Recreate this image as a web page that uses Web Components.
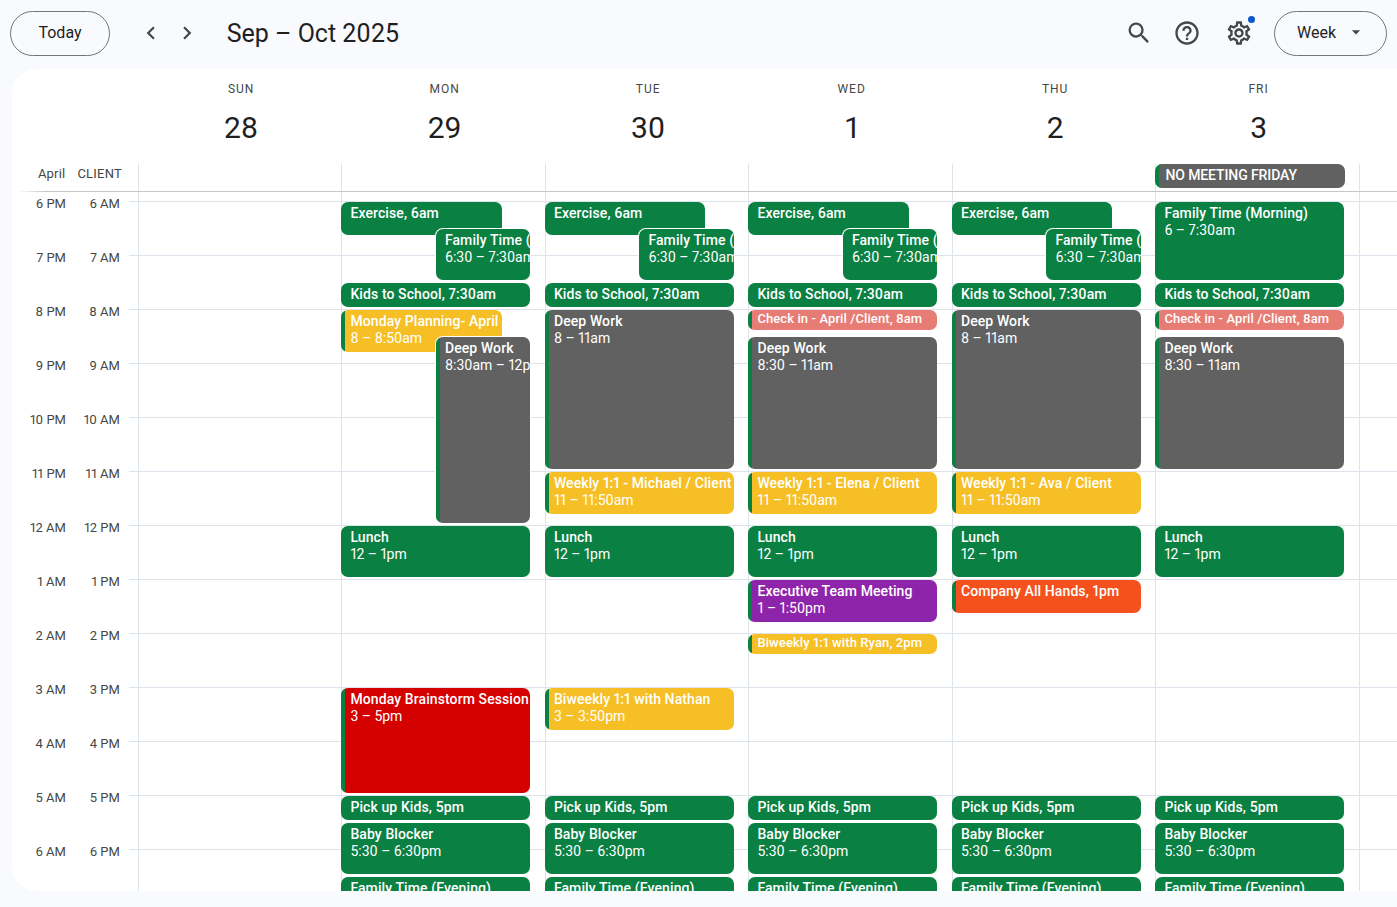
<!DOCTYPE html>
<html lang="en">
<head>
<meta charset="utf-8">
<title>Calendar</title>
<style>
  html, body { margin: 0; height: 100%; overflow: hidden; }
  body { background: #f8fafd; font-family: Roboto, "Noto Sans", sans-serif; color: #1f1f1f; font-variant-numeric: proportional-nums; }
</style>
</head>
<body>
<cal-app></cal-app>

<script>
const ICONS = {
  prev: 'M15.41 7.41 14 6l-6 6 6 6 1.41-1.41L10.83 12z',
  next: 'M10 6 8.59 7.41 13.17 12l-4.58 4.58L10 18l6-6z',
  search: 'M15.5 14h-.79l-.28-.27A6.471 6.471 0 0 0 16 9.5 6.5 6.5 0 1 0 9.5 16c1.61 0 3.09-.59 4.23-1.57l.27.28v.79l5 4.99L20.49 19l-4.99-5zm-6 0C7.01 14 5 11.99 5 9.5S7.01 5 9.5 5 14 7.01 14 9.5 11.99 14 9.5 14z',
  help: 'M11 18h2v-2h-2v2zm1-16C6.48 2 2 6.48 2 12s4.48 10 10 10 10-4.48 10-10S17.52 2 12 2zm0 18c-4.41 0-8-3.59-8-8s3.59-8 8-8 8 3.59 8 8-3.59 8-8 8zm0-14c-2.21 0-4 1.79-4 4h2c0-1.1.9-2 2-2s2 .9 2 2c0 2-3 1.75-3 5h2c0-2.25 3-2.5 3-5 0-2.21-1.79-4-4-4z',
  gear: 'M19.43 12.98c.04-.32.07-.64.07-.98 0-.34-.03-.66-.07-.98l2.11-1.65c.19-.15.24-.42.12-.64l-2-3.46c-.09-.16-.26-.25-.44-.25-.06 0-.12.01-.17.03l-2.49 1c-.52-.4-1.08-.73-1.69-.98l-.38-2.65C14.46 2.18 14.25 2 14 2h-4c-.25 0-.46.18-.49.42l-.38 2.65c-.61.25-1.17.59-1.69.98l-2.49-1c-.06-.02-.12-.03-.18-.03-.17 0-.34.09-.43.25l-2 3.46c-.13.22-.07.49.12.64l2.11 1.65c-.04.32-.07.65-.07.98 0 .33.03.66.07.98l-2.11 1.65c-.19.15-.24.42-.12.64l2 3.46c.09.16.26.25.44.25.06 0 .12-.01.17-.03l2.49-1c.52.4 1.08.73 1.69.98l.38 2.65c.03.24.24.42.49.42h4c.25 0 .46-.18.49-.42l.38-2.65c.61-.25 1.17-.59 1.69-.98l2.49 1c.06.02.12.03.18.03.17 0 .34-.09.43-.25l2-3.46c.12-.22.07-.49-.12-.64l-2.11-1.65zm-1.98-1.71c.04.31.05.52.05.73 0 .21-.02.43-.05.73l-.14 1.13.89.7 1.08.84-.7 1.21-1.27-.51-1.04-.42-.9.68c-.43.32-.84.56-1.25.73l-1.06.43-.16 1.13-.2 1.35h-1.4l-.19-1.35-.16-1.13-1.06-.43c-.43-.18-.83-.41-1.23-.71l-.91-.7-1.06.43-1.27.51-.7-1.21 1.08-.84.89-.7-.14-1.13c-.03-.31-.05-.54-.05-.74s.02-.43.05-.73l.14-1.13-.89-.7-1.08-.84.7-1.21 1.27.51 1.04.42.9-.68c.43-.32.84-.56 1.25-.73l1.06-.43.16-1.13.2-1.35h1.39l.19 1.35.16 1.13 1.06.43c.43.18.83.41 1.23.71l.91.7 1.06-.43 1.27-.51.7 1.21-1.07.85-.89.7.14 1.13zM12 8c-2.21 0-4 1.79-4 4s1.79 4 4 4 4-1.79 4-4-1.79-4-4-4zm0 6c-1.1 0-2-.9-2-2s.9-2 2-2 2 .9 2 2-.9 2-2 2z',
  caret: 'M7 10l5 5 5-5z'
};

const svg = (name, size = 24) =>
  `<svg width="${size}" height="${size}" viewBox="0 0 24 24" fill="currentColor" aria-hidden="true"><path d="${ICONS[name]}"/></svg>`;

const GREEN = '#0b8043', YELLOW = '#f6bf26', GREY = '#616161', RED = '#d50000',
      PURPLE = '#8e24aa', ORANGE = '#f4511e', PINK = '#e67c73';

// Px values are measured from the top of the scrolling grid (y = 192 on the page)
const y = (pageY) => pageY - 192;

function commonEvents(extra) {
  return [
    ...extra,
    { title: 'Kids to School, 7:30am', top: 283, bottom: 307, color: GREEN },
    { title: 'Lunch', time: '12 – 1pm', top: 526, bottom: 577, color: GREEN },
    { title: 'Pick up Kids, 5pm', top: 796, bottom: 820, color: GREEN },
    { title: 'Baby Blocker', time: '5:30 – 6:30pm', top: 823, bottom: 874, color: GREEN },
    { title: 'Family Time (Evening)', top: 877, bottom: 931, color: GREEN }
  ];
}

const morning = [
  { title: 'Exercise, 6am', top: 202, bottom: 235, color: GREEN, width: 160.4 },
  { title: 'Family Time (Morning)', time: '6:30 – 7:30am', top: 229, bottom: 280, color: GREEN, shift: 94.5, ring: true }
];

const weekly = (name) => ({ title: `Weekly 1:1 - ${name} / Client`, time: '11 – 11:50am', top: 472, bottom: 514, color: YELLOW, strip: true });
const checkIn = { title: 'Check in - April /Client, 8am', top: 310, bottom: 330, color: PINK, strip: true, tiny: true };

const DAYS = [
  { name: 'SUN', date: '28', events: [] },
  { name: 'MON', date: '29', events: commonEvents([
    ...morning,
    { title: 'Monday Planning- April /Client', time: '8 – 8:50am', top: 310, bottom: 352, color: YELLOW, strip: true, width: 160.4 },
    { title: 'Deep Work', time: '8:30am – 12pm', top: 337, bottom: 523, color: GREY, strip: true, shift: 94.5, ring: true },
    { title: 'Monday Brainstorm Session', time: '3 – 5pm', top: 688, bottom: 793, color: RED, strip: true }
  ]) },
  { name: 'TUE', date: '30', events: commonEvents([
    ...morning,
    { title: 'Deep Work', time: '8 – 11am', top: 310, bottom: 469, color: GREY, strip: true },
    weekly('Michael'),
    { title: 'Biweekly 1:1 with Nathan', time: '3 – 3:50pm', top: 688, bottom: 730, color: YELLOW, strip: true }
  ]) },
  { name: 'WED', date: '1', events: commonEvents([
    ...morning,
    checkIn,
    { title: 'Deep Work', time: '8:30 – 11am', top: 337, bottom: 469, color: GREY, strip: true },
    weekly('Elena'),
    { title: 'Executive Team Meeting', time: '1 – 1:50pm', top: 580, bottom: 622, color: PURPLE, strip: true },
    { title: 'Biweekly 1:1 with Ryan, 2pm', top: 634, bottom: 654, color: YELLOW, strip: true, tiny: true }
  ]) },
  { name: 'THU', date: '2', events: commonEvents([
    ...morning,
    { title: 'Deep Work', time: '8 – 11am', top: 310, bottom: 469, color: GREY, strip: true },
    weekly('Ava'),
    { title: 'Company All Hands, 1pm', top: 580, bottom: 613, color: ORANGE, strip: true }
  ]) },
  { name: 'FRI', date: '3', allDay: 'NO MEETING FRIDAY', events: commonEvents([
    { title: 'Family Time (Morning)', time: '6 – 7:30am', top: 202, bottom: 280, color: GREEN },
    checkIn,
    { title: 'Deep Work', time: '8:30 – 11am', top: 337, bottom: 469, color: GREY, strip: true }
  ]) }
];

const LEFT_ZONE = ['6 PM', '7 PM', '8 PM', '9 PM', '10 PM', '11 PM', '12 AM', '1 AM', '2 AM', '3 AM', '4 AM', '5 AM', '6 AM'];
const RIGHT_ZONE = ['6 AM', '7 AM', '8 AM', '9 AM', '10 AM', '11 AM', '12 PM', '1 PM', '2 PM', '3 PM', '4 PM', '5 PM', '6 PM'];

class CalToolbar extends HTMLElement {
  connectedCallback() {
    this.attachShadow({ mode: 'open' }).innerHTML = `
      <style>
        :host {
          display: flex;
          align-items: center;
          height: 69px;
          padding: 0 10px 3px;
          box-sizing: border-box;
          color: #1f1f1f;
        }
        .pill {
          display: flex;
          align-items: center;
          justify-content: center;
          box-sizing: border-box;
          height: 45px;
          padding-bottom: 2px;
          border: 1px solid #747775;
          border-radius: 23px;
          font-size: 16px;
          font-weight: 400;
          color: #1f1f1f;
        }
        .today { width: 100px; }
        .week { width: 113px; gap: 10px; padding-left: 2px; margin-left: 21.5px; }
        .week svg { color: #444746; width: 20px; height: 20px; }
        .nav { display: flex; gap: 9.7px; margin-left: 28px; color: #444746; }
        .title { margin-left: 27px; font-size: 25px; font-weight: 400; flex: 1; }
        .icons { display: flex; color: #444746; }
        .icons svg { display: block; }
        .help { margin-left: 19.5px; }
        .gear { position: relative; margin-left: 24px; }
        .gear::after {
          content: '';
          position: absolute;
          top: -3px;
          left: 23px;
          width: 7px;
          height: 7px;
          border-radius: 50%;
          background: #0b57d0;
        }
      </style>
      <div class="pill today">Today</div>
      <div class="nav">${svg('prev', 26)}${svg('next', 26)}</div>
      <div class="title">Sep – Oct 2025</div>
      <div class="icons">
        <span>${svg('search', 28)}</span>
        <span class="help">${svg('help', 28)}</span>
        <span class="gear">${svg('gear', 28)}</span>
      </div>
      <div class="pill week">Week ${svg('caret')}</div>
    `;
  }
}

class CalEvent extends HTMLElement {
  connectedCallback() {
    this.attachShadow({ mode: 'open' }).innerHTML = `
      <style>
        :host {
          position: absolute;
          box-sizing: border-box;
          overflow: hidden;
          border-radius: 7px;
          color: #fff;
          font-size: 14px;
          line-height: 17px;
        }
        .box {
          box-sizing: border-box;
          height: 100%;
          padding: 3px 0 0 9px;
          white-space: nowrap;
          overflow: hidden;
        }
        :host([strip]) .box { border-left: 4px solid ${GREEN}; padding-left: 5px; }
        :host([tiny]) { font-size: 13px; line-height: 16px; }
        :host([tiny]) .box { padding-top: 1px; }
        .title { font-weight: 500; letter-spacing: 0.1px; }
      </style>
      <div class="box"><div class="title"><slot></slot></div><div><slot name="time"></slot></div></div>
    `;
  }
}

class CalDay extends HTMLElement {
  connectedCallback() {
    this.attachShadow({ mode: 'open' }).innerHTML = `
      <style>
        :host {
          display: block;
          position: relative;
          border-left: 1px solid #dde3ea;
          min-width: 0;
        }
      </style>
      <slot></slot>
    `;
  }
}

class CalGrid extends HTMLElement {
  connectedCallback() {
    const cols = DAYS.map(d => `
      <div class="head"><div class="dow">${d.name}</div><div class="date">${d.date}</div></div>`).join('');
    const allDay = DAYS.map(d => `
      <div class="ad-cell">${d.allDay ? `<div class="ad-event">${d.allDay}</div>` : ''}</div>`).join('');
    const labels = (list) => list.map(t => `<div class="tm">${t}</div>`).join('');

    this.attachShadow({ mode: 'open' }).innerHTML = `
      <style>
        :host {
          display: flex;
          flex-direction: column;
          height: 822px;
          margin-left: 12px;
          background: #fff;
          border-radius: 24px 0 0 24px;
          overflow: hidden;
          --cols: 125.9px repeat(6, 203.5px) 1fr;
        }
        .row { display: grid; grid-template-columns: var(--cols); flex: none; }
        .heads { height: 95px; color: #444746; }
        .head { display: flex; flex-direction: column; align-items: center; padding: 12px 0 0 3px; }
        .dow { font-size: 12px; font-weight: 400; letter-spacing: 1px; line-height: 16px; }
        .date { font-size: 30px; line-height: 36px; margin-top: 13px; color: #1f1f1f; }
        .alldays {
          height: 28px;
          box-sizing: border-box;
          position: relative;
          z-index: 1;
          border-bottom: 1px solid #c4c7c5;
          border-image: linear-gradient(to right, transparent 6px, #c4c7c5 36px) 1;
        }
        .ad-labels { display: flex; justify-content: flex-end; gap: 12px; padding: 2px 16px 0 0; font-size: 13px; line-height: 16px; color: #444746; letter-spacing: 0.2px; }
        .ad-cell { border-left: 1px solid #dde3ea; }
        .ad-event {
          box-sizing: border-box;
          width: 190px;
          height: 24px;
          margin-left: -1px;
          line-height: 23px;
          padding-left: 6px;
          border-left: 4px solid ${GREEN};
          border-radius: 7px;
          background: ${GREY};
          color: #fff;
          font-size: 14px;
          font-weight: 500;
          letter-spacing: -0.1px;
          white-space: nowrap;
        }
        .body { flex: 1; grid-auto-rows: 100%; min-height: 0; overflow: hidden; position: relative; }
        .body::before {
          content: '';
          position: absolute;
          inset: 0 0 0 117px;
          background: linear-gradient(#dde3ea 1px, transparent 1px) 0 9px / 100% 54px repeat-y;
        }
        .gutter { position: relative; display: flex; justify-content: flex-end; padding: 4px 18px 0 0; font-size: 13px; color: #444746; }
        .zone { display: flex; flex-direction: column; align-items: flex-end; width: 54px; }
        .tm { height: 54px; line-height: 16px; flex: none; white-space: nowrap; }
      </style>
      <div class="row heads"><div></div>${cols}<div></div></div>
      <div class="row alldays">
        <div class="ad-labels"><span>April</span><span>CLIENT</span></div>
        ${allDay}
        <div class="ad-cell"></div>
      </div>
      <div class="row body">
        <div class="gutter"><div class="zone">${labels(LEFT_ZONE)}</div><div class="zone">${labels(RIGHT_ZONE)}</div></div>
        <slot></slot>
      </div>
    `;

    DAYS.forEach(d => {
      const day = document.createElement('cal-day');
      d.events.forEach(e => {
        const ev = document.createElement('cal-event');
        const width = e.width || (e.shift ? 94.2 : 188.7);
        // -1 so the event covers the column's border line, as in the reference
        ev.style.cssText = `top:${y(e.top)}px;height:${e.bottom - e.top}px;left:${(e.shift || 0) - 1}px;width:${width}px;background:${e.color};`
          + (e.ring ? 'box-shadow:0 0 0 1px #fff;' : '');
        if (e.strip) ev.setAttribute('strip', '');
        if (e.tiny) ev.setAttribute('tiny', '');
        ev.textContent = e.title;
        if (e.time) {
          const t = document.createElement('span');
          t.slot = 'time';
          t.textContent = e.time;
          ev.appendChild(t);
        }
        day.appendChild(ev);
      });
      this.appendChild(day);
    });
    this.appendChild(document.createElement('cal-day'));
  }
}

class CalApp extends HTMLElement {
  connectedCallback() {
    this.attachShadow({ mode: 'open' }).innerHTML = `
      <style>
        :host { display: block; }
      </style>
      <cal-toolbar></cal-toolbar>
      <cal-grid></cal-grid>
    `;
  }
}

customElements.define('cal-toolbar', CalToolbar);
customElements.define('cal-event', CalEvent);
customElements.define('cal-day', CalDay);
customElements.define('cal-grid', CalGrid);
customElements.define('cal-app', CalApp);
</script>
</body>
</html>
